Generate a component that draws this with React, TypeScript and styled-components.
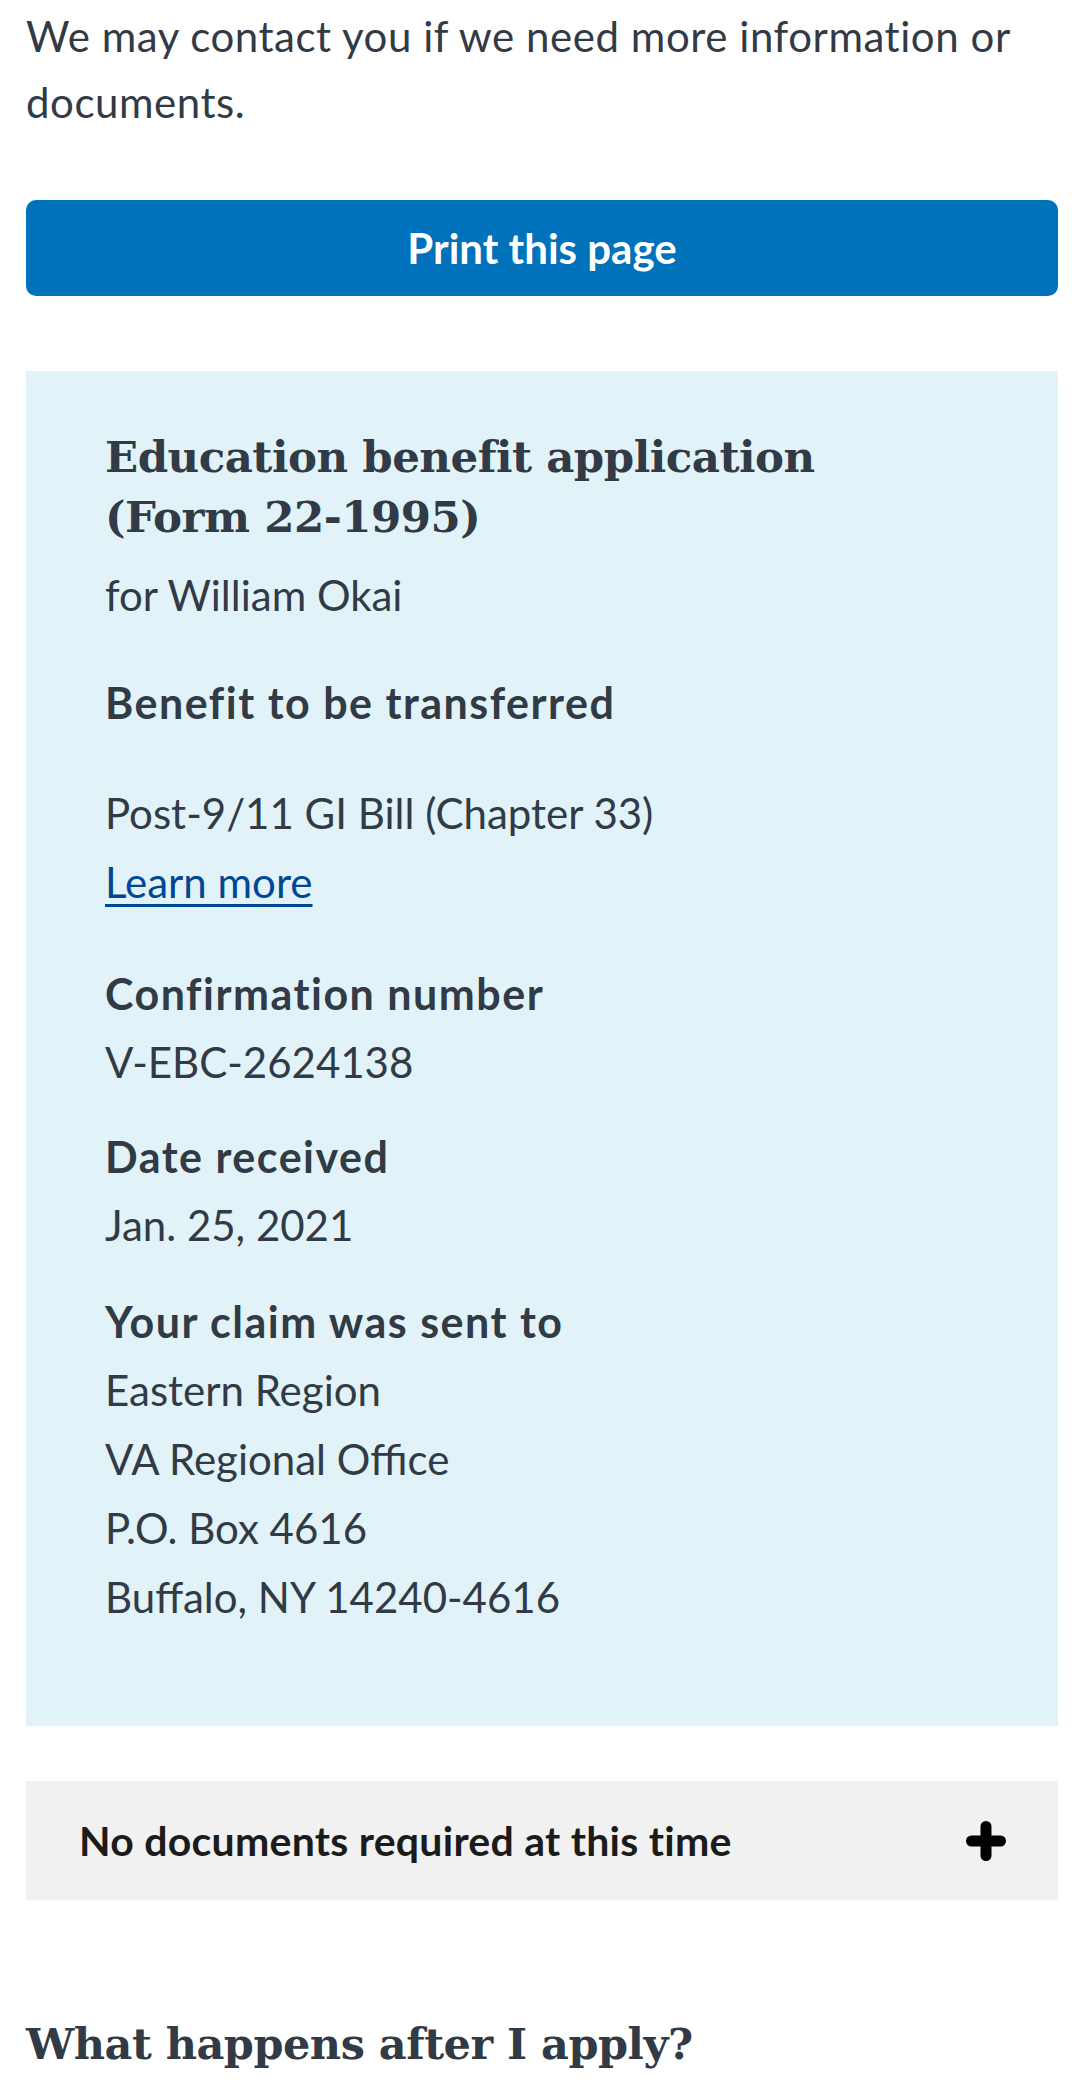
import styled, { createGlobalStyle } from "styled-components";

const GlobalStyle = createGlobalStyle`
  html, body {
    margin: 0;
    padding: 0;
    background: #ffffff;
  }
  body {
    font-family: "Lato", "Open Sans", sans-serif;
    color: #323a45;
  }
`;

const Page = styled.main`
  padding: 0 22px 0 26px;
`;

const Intro = styled.p`
  margin: 3px 0 0;
  font-size: 42px;
  line-height: 66px;
  letter-spacing: 0.55px;
`;

const PrintButton = styled.button`
  display: block;
  width: 100%;
  height: 96px;
  margin-top: 65px;
  border: none;
  border-radius: 10px;
  background: #0071bb;
  color: #ffffff;
  font-family: "Lato", "Open Sans", sans-serif;
  font-weight: 700;
  font-size: 42px;
`;

const SummaryBox = styled.section`
  margin-top: 75px;
  background: #e1f3f8;
  padding: 56px 79px 94px;
`;

const Title = styled.h2`
  margin: 0;
  font-family: "DejaVu Serif", "Liberation Serif", serif;
  font-weight: 700;
  font-size: 43.5px;
  line-height: 60px;
  letter-spacing: -0.5px;
`;

const Subtitle = styled.p`
  margin: 14px 0 0;
  font-size: 42px;
  line-height: 69px;
`;

const Label = styled.h3<{ $gap?: number }>`
  margin: ${(p) => p.$gap ?? 25}px 0 0;
  font-size: 43px;
  line-height: 69px;
  font-weight: 700;
  letter-spacing: 1.5px;
`;

const Value = styled.p<{ $gap?: number }>`
  margin: ${(p) => p.$gap ?? 0}px 0 0;
  font-size: 42px;
  line-height: 69px;
`;

const Link = styled.a`
  display: block;
  font-size: 42px;
  line-height: 69px;
  color: #004795;
  text-decoration: underline;
  text-underline-offset: 6px;
  text-decoration-thickness: 3px;
`;

const Accordion = styled.button`
  display: flex;
  align-items: center;
  justify-content: space-between;
  width: 100%;
  height: 119px;
  margin-top: 55px;
  padding: 0 52px 0 53px;
  border: none;
  background: #f1f1f1;
  color: #1b1b1b;
  font-family: "Lato", "Open Sans", sans-serif;
  font-weight: 700;
  font-size: 41px;
  letter-spacing: 0.25px;
  text-align: left;
`;

const SectionTitle = styled.h2`
  margin: 114px 0 0;
  font-family: "DejaVu Serif", "Liberation Serif", serif;
  font-weight: 700;
  font-size: 43px;
  line-height: 60px;
  letter-spacing: -0.5px;
`;

function PlusIcon() {
  return (
    <svg width="40" height="40" viewBox="0 0 40 40" aria-hidden="true">
      <path
        d="M20 5.5v29M5.5 20h29"
        stroke="#000"
        strokeWidth="11"
        strokeLinecap="round"
      />
    </svg>
  );
}

export default function App() {
  return (
    <>
      <GlobalStyle />
      <Page>
        <Intro>
          We may contact you if we need more information or documents.
        </Intro>
        <PrintButton>Print this page</PrintButton>

        <SummaryBox>
          <Title>
            Education benefit application
            <br />
            (Form 22-1995)
          </Title>
          <Subtitle>for William Okai</Subtitle>

          <Label $gap={38}>Benefit to be transferred</Label>
          <Value $gap={42}>Post-9/11 GI Bill (Chapter 33)</Value>
          <Link href="#">Learn more</Link>

          <Label $gap={42}>Confirmation number</Label>
          <Value>V-EBC-2624138</Value>

          <Label>Date received</Label>
          <Value>Jan. 25, 2021</Value>

          <Label $gap={27}>Your claim was sent to</Label>
          <Value>Eastern Region</Value>
          <Value>VA Regional Office</Value>
          <Value>P.O. Box 4616</Value>
          <Value>Buffalo, NY 14240-4616</Value>
        </SummaryBox>

        <Accordion>
          No documents required at this time
          <PlusIcon />
        </Accordion>

        <SectionTitle>What happens after I apply?</SectionTitle>
      </Page>
    </>
  );
}
